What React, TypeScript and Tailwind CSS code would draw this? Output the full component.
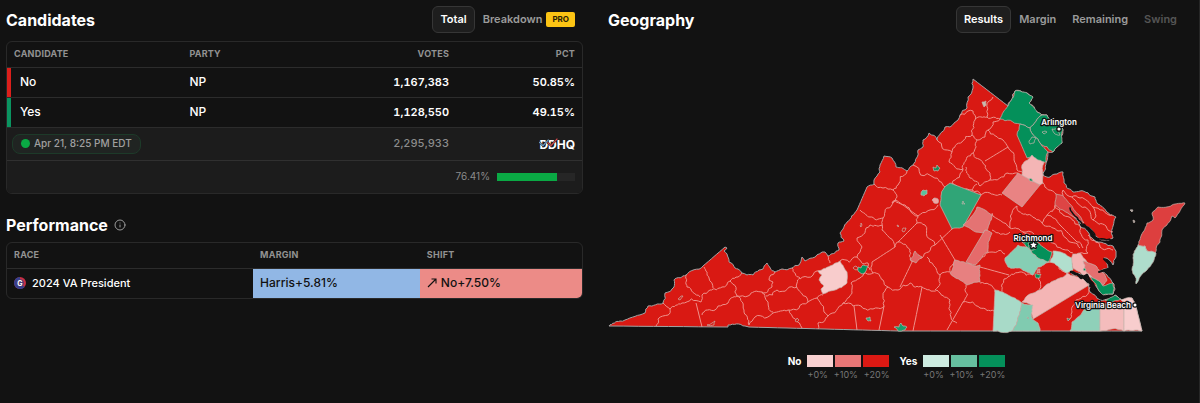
import { Info } from "lucide-react";

type Point = [number, number];

const parse = (s: string): Point[] =>
  s.trim().split(/\s+/).map((pair) => pair.split(",").map(Number) as Point);

// Midpoint displacement; an edge shared by two shapes gets the same wiggle in both.
function wiggle(a: Point, b: Point, depth: number, amp: number): Point[] {
  const dx = b[0] - a[0];
  const dy = b[1] - a[1];
  const len = Math.hypot(dx, dy);
  if (depth === 0 || len < 3) return [b];
  const h = Math.sin((a[0] + b[0]) * 12.9898 + (a[1] + b[1]) * 78.233) * 43758.5453;
  const r = (h - Math.floor(h) - 0.5) * amp * len;
  const sign = dx > 0 || (dx === 0 && dy > 0) ? 1 : -1;
  const mid: Point = [
    (a[0] + b[0]) / 2 - ((dy * sign) / len) * r,
    (a[1] + b[1]) / 2 + ((dx * sign) / len) * r,
  ];
  return [...wiggle(a, mid, depth - 1, amp), ...wiggle(mid, b, depth - 1, amp)];
}

function rough(s: string, closed = false, amp = 0.3): string {
  const pts = parse(s);
  if (closed) pts.push(pts[0]);
  const out: Point[] = [pts[0]];
  for (let i = 1; i < pts.length; i++) {
    const len = Math.hypot(pts[i][0] - pts[i - 1][0], pts[i][1] - pts[i - 1][1]);
    out.push(...wiggle(pts[i - 1], pts[i], 3, len > 24 ? 0 : amp));
  }
  return "M" + out.map((p) => p[0].toFixed(1) + " " + p[1].toFixed(1)).join("L") + (closed ? "Z" : "");
}

const mainland =
  "609,326 620,321 625,320 645,313 648,306 663,303 665,293 674,287 674,280 686,275 703,266 725,247 727,248 724,251 727,254 729,262 735,268 738,269 742,273 747,275 753,275 759,270 763,269 767,263 775,272 782,269 792,268 799,265 802,257 805,261 825,252 828,256 839,250 838,243 844,241 840,233 847,222 857,210 867,187 874,184 874,180 880,172 880,165 884,156 892,158 896,167 907,171 913,165 918,150 923,147 923,140 929,133 937,140 945,127 950,127 958,120 960,115 967,108 968,97 973,88 973,79 1008,106 1015,91 1027,93 1033,97 1029,103 1037,112 1047,115 1052,121 1061,125 1063,130 1062,143 1053,152 1048,152 1046,163 1043,175 1050,177 1057,174 1063,172 1064,183 1073,192 1080,191 1095,197 1097,203 1106,211 1116,217 1113,226 1113,238 1104,240 1095,236 1092,230 1080,223 1075,215 1070,209 1074,217 1080,226 1088,232 1094,240 1113,246 1116,257 1113,265 1104,258 1108,268 1100,271 1107,275 1112,282 1114,284 1113,294 1103,295 1098,289 1092,283 1087,276 1082,274 1070,272 1082,278 1089,284 1090,292 1100,300 1110,299 1115,295 1122,300 1132,298 1135,303 1142,331 900,331 825,329 749,327 745,326 728,325 728,327";

const borders = [
  "656,326 658,319 668,315 670,309 682,303 701,302 702,295 710,290 722,287 730,281 742,273",
  "663,303 670,309",
  "686,275 687,287 700,297",
  "704,267 709,278 713,288",
  "696,303 702,327",
  "702,315 715,310 718,306 728,303 737,296 748,296 762,292",
  "730,281 737,296 744,310 749,325",
  "762,292 768,302 773,312",
  "749,325 755,317 773,313 788,310 808,302 817,298 823,295",
  "775,272 769,280 773,282 772,287 762,292",
  "766,296 777,290 797,287",
  "792,268 800,278 797,283 808,302",
  "800,279 820,271",
  "789,310 802,328",
  "817,298 828,316 818,323 818,329",
  "828,316 843,303 852,293 851,283 860,278 873,273",
  "843,303 853,306 873,309 884,306",
  "854,306 857,330",
  "888,287 884,306 879,330",
  "873,273 883,280 888,287 898,290 910,283 922,287 937,290 950,300 951,317 957,323",
  "922,287 913,331",
  "828,256 830,263",
  "840,261 857,257 862,247 857,238 870,225 883,226",
  "857,257 868,263 870,270",
  "860,210 870,217 883,218 885,212 896,200 918,216 917,223 898,242 895,247 872,262 873,273",
  "883,218 882,230 895,247",
  "918,216 938,205",
  "917,223 925,225 935,245 922,258 912,262",
  "898,242 910,250 912,262 900,287",
  "935,245 953,228",
  "927,257 940,275 935,290",
  "940,275 950,272",
  "874,184 883,188 893,190 898,185 907,171",
  "893,190 897,197 892,203 896,200",
  "895,200 910,210 918,216",
  "913,165 933,177 945,187",
  "937,140 952,152 949,162 963,169 952,183",
  "952,152 962,142 972,135 975,120 973,111 968,111 960,115",
  "975,118 987,117 993,97",
  "987,117 1000,119",
  "972,135 977,140 985,137 988,130 993,122 1000,119",
  "963,169 967,157 973,153 977,140",
  "973,153 983,163 990,175 990,180 980,186 970,178 966,167",
  "985,161 1008,147",
  "988,130 1003,140 1008,147 1014,160 1017,170 1023,173",
  "952,183 972,190 977,184",
  "990,180 1007,173 1018,173",
  "972,190 981,195 990,193 1002,195",
  "992,213 1010,228 1023,232 1034,234",
  "1017,206 1010,228",
  "1017,206 1027,215 1042,223 1053,228 1066,238 1080,248",
  "1042,223 1047,215 1055,205 1063,203",
  "992,230 1010,232",
  "982,257 992,252 1005,254",
  "980,267 1009,275",
  "1003,293 1004,279 1020,272 1033,275",
  "980,283 995,292",
  "966,285 963,302 947,330",
  "963,302 980,308 994,311",
  "1038,277 1038,297",
  "950,272 955,260 940,235",
  "1043,183 1056,194",
  "1060,200 1063,190 1072,197 1085,207 1093,220 1106,226 1113,232",
  "1072,197 1080,198 1093,207 1112,215",
  "1093,207 1096,216 1093,220",
  "1055,206 1063,215 1080,226 1088,240 1088,253 1080,253",
  "1047,215 1060,225 1077,242 1083,248",
  "1023,232 1040,236 1053,243 1073,253",
  "1088,235 1100,247 1113,250",
  "1050,262 1058,266 1067,273",
  "1090,287 1076,300 1072,312 1068,320",
];

const counties: [string, string][] = [
  ["#04905a", "1015,91 1027,93 1033,97 1029,103 1037,112 1042,115 1030,128 1020,124 1000,119 1008,106"],
  ["#04905a", "1042,115 1047,115 1052,121 1061,125 1063,130 1062,143 1053,152 1040,143 1030,128"],
  ["#04905a", "1020,124 1030,128 1040,143 1048,152 1046,162 1032,157 1027,158 1017,135"],
  ["#f4b5b5", "1032,155 1044,162 1043,175 1043,183 1040,185 1022,175 1022,165"],
  ["#e98383", "1018,173 1040,185 1022,207 1002,193"],
  ["#30a577", "950,183 981,195 963,227 956,228 952,229 940,205 944,188"],
  ["#e47373", "977,207 992,215 985,232 963,225"],
  ["#e56b6b", "985,230 992,233 988,252 980,260 975,265 966,262"],
  ["#e78080", "955,260 966,263 980,265 980,282 967,285 950,273"],
  ["#86ceb4", "1018,245 1027,247 1032,253 1038,258 1050,262 1038,267 1033,275 1020,268 1008,267 1005,258"],
  ["#04905a", "1022,242 1033,241 1043,247 1052,252 1048,262 1038,258 1032,253 1027,247"],
  ["#b1dfce", "1053,251 1063,253 1072,258 1073,270 1067,273 1058,266 1050,262"],
  ["#f4b5b5", "1073,254 1080,253 1087,262 1092,277 1082,274 1073,268"],
  ["#e56f6f", "1083,261 1097,267 1102,272 1107,280 1103,285 1085,270"],
  ["#04905a", "1090,277 1097,280 1103,286 1113,283 1113,294 1103,295 1098,289"],
  ["#04905a", "1112,297 1115,295 1121,299 1110,303 1105,300"],
  ["#f4b5b5", "1067,273 1082,278 1089,285 1033,319 1031,305 1022,302 1040,290 1056,280"],
  ["#a8dac8", "995,290 1008,295 1022,303 1018,317 1012,331 993,331"],
  ["#80cbb0", "1022,303 1033,305 1032,318 1038,323 1040,331 1012,331 1018,317"],
  ["#8fd0b9", "1070,331 1072,322 1085,308 1100,306 1100,331"],
  ["#f4bcbc", "1100,303 1110,303 1124,304 1124,331 1100,331"],
  ["#f8cdcd", "1121,300 1132,298 1135,303 1142,331 1124,331 1124,304"],
  ["#f8cccc", "818,271 830,266 840,261 847,272 847,283 835,290 823,294 821,289 824,286 819,280 822,275"],
  ["#e26565", "915,251 922,257 916,263 910,260"],
  ["#dd4545", "1056,194 1064,197 1070,204 1078,214 1084,223 1072,216 1063,210 1055,205"],
  ["#dd3f3f", "1158,207 1172,205 1185,203 1175,218 1172,216 1162,230 1160,242 1155,253 1147,251 1145,246 1138,245 1143,232 1147,223 1153,220 1152,213"],
  ["#aeddcc", "1138,245 1145,246 1147,251 1156,253 1147,270 1136,284 1132,270 1133,258"],
];

const cities: [string, string][] = [
  ["#178f5d", "933,167 936,168 937,165 940,168 938,171 934,171"],
  ["#5bc29c", "921,193 923,190 927,190 927,194 924,196 921,195"],
  ["#f2a3a3", "932,200 934,198 938,199 938,203 934,203"],
  ["#30a577", "962,204 963,201 965,204"],
  ["#c9b9ac", "982,102 986,101 986,105 984,107"],
  ["#04905a", "858,267 861,268 863,265 868,266 866,271 862,274 858,271"],
  ["#d91913", "853,268 856,266 858,269 856,270"],
  ["#30a577", "866,318 870,317 871,321 868,321"],
  ["#1a9d6c", "894,327 899,327 901,323 903,326 907,327 905,330 898,331"],
  ["#04905a", "1029,179 1032,179 1033,182 1030,181"],
  ["#04905a", "1035,274 1041,274 1040,278 1036,278"],
  ["#e56f6f", "1038,269 1040,269 1040,273 1037,273"],
  ["#14805a", "1027,317 1029,318 1028,319"],
  ["#14805a", "1067,318 1070,319 1068,321"],
  ["#d91913", "678,299 681,296 683,296 680,300"],
  ["#d91913", "707,325 712,323 715,321 714,325"],
  ["#d91913", "795,321 797,318 799,320 797,322"],
  ["#d91913", "860,226 861,223 862,225 861,227"],
  ["#d91913", "897,225 899,226 898,227"],
  ["#d91913", "902,231 903,228 906,228 904,232"],
  ["#04905a", "1029,141 1032,137 1036,138 1034,143 1030,144"],
  ["#04905a", "1042,132 1045,131 1047,132 1044,134"],
  ["#04905a", "1052,129 1059,130 1060,135 1054,133"],
  ["#04905a", "1083,269 1085,268 1086,270 1084,271"],
  ["#aaa7a5", "1130,210 1133,210 1132,212"],
  ["#aaa7a5", "1133,220 1135,221 1134,223"],
  ["#04905a", "1028,243 1033,240 1038,243 1036,249 1030,250"],
];

function VirginiaMap() {
  return (
    <svg viewBox="608 36 577 300" className="block w-full overflow-visible" role="img" aria-label="Virginia results by county">
      <path d={rough(mainland, true)} fill="#d91913" stroke="#a3a3a3" strokeWidth="1" strokeLinejoin="round" />
      <g fill="none" stroke="#ee918b" strokeWidth="1" strokeLinejoin="round">
        {borders.map((b) => (
          <path key={b} d={rough(b, false, 0.42)} />
        ))}
      </g>
      <g stroke="#c5b5ae" strokeWidth="0.7" strokeLinejoin="round">
        {counties.map(([fill, pts]) => (
          <path key={pts} d={rough(pts, true, 0.22)} fill={fill} />
        ))}
        {cities.map(([fill, pts]) => (
          <path key={pts} d={rough(pts, true)} fill={fill} />
        ))}
      </g>
      <g fill="none" stroke="#121212" strokeLinecap="round" strokeLinejoin="round">
        <path d={rough("1070,208 1075,216 1082,224 1090,229 1095,237 1104,239 1114,241", false)} strokeWidth="1.5" />
        <path d={rough("1071,272 1077,274 1081,278 1087,275 1090,281 1095,290 1103,297 1109,296", false)} strokeWidth="2.6" />
        <path d="M1099 272l12-4M1104 259l6 6" strokeWidth="2" />
      </g>
      <g fill="#fff" stroke="#111" strokeWidth="2.5" paintOrder="stroke" strokeLinejoin="round" className="font-['Inter',sans-serif] text-[8px] font-semibold">
        <circle cx="1059" cy="129" r="1.6" />
        <circle cx="1135" cy="305" r="1.5" />
        <path d="M1033.5 241.6l1 2.2 2.4.2-1.8 1.6.6 2.3-2.2-1.2-2.1 1.2.5-2.3-1.8-1.6 2.4-.2z" />
        <text x="1059" y="125" textAnchor="middle">Arlington</text>
        <text x="1033" y="241" textAnchor="middle">Richmond</text>
        <text x="1103" y="308" textAnchor="middle">Virginia Beach</text>
      </g>
    </svg>
  );
}

function Tab({ label, active, dim }: { label: string; active?: boolean; dim?: boolean }) {
  const look = active
    ? "border-[#363636] bg-[#1e1e1e] text-white"
    : dim
      ? "border-transparent text-[#555]"
      : "border-transparent text-[#9b9b9b]";
  return (
    <button type="button" disabled={dim} className={"h-[27px] rounded-md border px-[7px] text-[11px] font-semibold " + look}>
      {label}
    </button>
  );
}

function DdhqLogo() {
  return (
    <svg viewBox="0 0 36 12" className="ml-auto block h-3 w-9" role="img" aria-label="DDHQ">
      <text x="36" y="10.5" textAnchor="end" fill="#fff" className="font-['Inter',sans-serif] text-[12px] font-bold">DDHQ</text>
      <g fill="none">
        <path d="M0 4L4 7.6L9.6 1.6" stroke="#1c1c1c" strokeWidth="2" />
        <path d="M8.6 4.4L12 7.6L18.4 0.6" stroke="#1c1c1c" strokeWidth="2" />
        <path d="M0 4L4 7.6L9.6 1.6" stroke="#6f9cc0" strokeWidth="1.2" />
        <path d="M8.6 4.4L12 7.6L18.4 0.6" stroke="#d0484c" strokeWidth="1.2" />
      </g>
    </svg>
  );
}

const head = "px-[7px] text-[9px] font-bold uppercase tracking-wide text-[#929292]";

const candidates = [
  { name: "No", party: "NP", votes: "1,167,383", pct: "50.85%", bar: "bg-[#dc1f1b]" },
  { name: "Yes", party: "NP", votes: "1,128,550", pct: "49.15%", bar: "bg-[#0a9460]" },
];

const legend = [
  { name: "No", steps: [["+0%", "bg-[#f8d0d0]"], ["+10%", "bg-[#e97676]"], ["+20%", "bg-[#dc1913]"]] },
  { name: "Yes", steps: [["+0%", "bg-[#cdebe0]"], ["+10%", "bg-[#66bf9f]"], ["+20%", "bg-[#04905a]"]] },
];

export default function App() {
  return (
    <main className="grid min-h-screen grid-cols-2 gap-[25px] border-r border-[#262626] bg-[#121212] pt-1.5 pr-3.5 pl-1.5 font-['Inter',sans-serif] text-white">
      <div>
        <section>
          <div className="mb-2 flex items-center justify-between">
            <h2 className="text-base leading-6 font-bold">Candidates</h2>
            <div className="flex items-center pr-2">
              <Tab label="Total" active />
              <button type="button" className="flex items-center gap-1 pl-2 text-[11px] font-semibold text-[#9b9b9b]">
                Breakdown
                <span className="rounded-xs bg-[#fcc414] px-1.5 text-[8px] leading-[15px] font-bold text-[#2c2203]">PRO</span>
              </button>
            </div>
          </div>
          <div className="overflow-hidden rounded-md border border-[#292929]">
            <table className="w-full table-fixed border-collapse text-xs font-medium">
              <colgroup>
                <col className="w-[30.5%]" />
                <col className="w-[24%]" />
                <col className="w-[23.6%]" />
                <col />
              </colgroup>
              <thead>
                <tr className="h-[25px] border-b border-[#2c2c2c]">
                  <th className={head + " text-left"}>Candidate</th>
                  <th className={head + " text-left"}>Party</th>
                  <th className={head + " text-right"}>Votes</th>
                  <th className={head + " text-right"}>Pct</th>
                </tr>
              </thead>
              <tbody>
                {candidates.map((c) => (
                  <tr key={c.name} className="border-b border-[#2c2c2c]">
                    <td className="p-0">
                      <div className="flex h-[29px] items-center gap-[9px]">
                        <span className={"h-full w-1 " + c.bar} />
                        {c.name}
                      </div>
                    </td>
                    <td className="px-[7px]">{c.party}</td>
                    <td className="px-[7px] text-right text-[11px] font-semibold tabular-nums">{c.votes}</td>
                    <td className="px-[7px] text-right text-[11px] font-semibold tabular-nums">{c.pct}</td>
                  </tr>
                ))}
              </tbody>
              <tfoot className="bg-[#1c1c1c]">
                <tr className="h-[33px] border-b border-[#303030] text-[#8b8b8b]">
                  <td colSpan={2} className="px-[5px]">
                    <div className="flex">
                      <span className="flex h-5 items-center gap-1 rounded-lg border border-[#1d3a29] bg-[#202422] px-2 text-[10px] text-[#a0a0a0]">
                        <span className="size-[9px] rounded-full bg-[#0aa944]" />
                        Apr 21, 8:25 PM EDT
                      </span>
                    </div>
                  </td>
                  <td className="px-[7px] text-right text-[11px] tabular-nums">2,295,933</td>
                  <td className="px-[7px]">
                    <DdhqLogo />
                  </td>
                </tr>
                <tr className="h-[33px]">
                  <td colSpan={4} className="px-[7px]">
                    <div className="flex items-center justify-end gap-[7px] text-[10px] font-normal text-[#8b8b8b]">
                      76.41%
                      <div className="h-2 w-[78px] bg-[#262626]">
                        <div className="h-full bg-[#0aa944]" style={{ width: "76.41%" }} />
                      </div>
                    </div>
                  </td>
                </tr>
              </tfoot>
            </table>
          </div>
        </section>

        <section className="mt-[19px]">
          <div className="mb-[5px] flex items-center gap-1.5">
            <h2 className="text-base leading-6 font-bold">Performance</h2>
            <Info className="size-3 text-[#9b9b9b]" strokeWidth={2} />
          </div>
          <div className="overflow-hidden rounded-md border border-[#292929]">
            <table className="w-full table-fixed border-collapse text-xs font-medium">
              <colgroup>
                <col className="w-[42.8%]" />
                <col className="w-[29%]" />
                <col />
              </colgroup>
              <thead>
                <tr className="h-[25px] border-b border-[#2c2c2c] text-left">
                  <th className={head}>Race</th>
                  <th className={head}>Margin</th>
                  <th className={head}>Shift</th>
                </tr>
              </thead>
              <tbody>
                <tr className="h-[30px]">
                  <td className="px-[7px]">
                    <div className="flex items-center gap-1.5 text-[11px]">
                      <svg viewBox="0 0 12 12" className="size-3" role="img" aria-label="General">
                        <circle cx="6" cy="6" r="6" fill="#c62f44" />
                        <path d="M6 0a6 6 0 1 0 4.500 10L6 6z" fill="#34408f" />
                        <circle cx="6" cy="6" r="3.8" fill="#4a3c78" />
                        <text x="6" y="8.6" textAnchor="middle" fill="#fff" className="text-[7px] font-bold">G</text>
                      </svg>
                      2024 VA President
                    </div>
                  </td>
                  <td className="bg-[#91b7e5] px-[7px] text-[#111]">Harris+5.81%</td>
                  <td className="bg-[#ec8b87] px-[7px] text-[#111]">
                    <div className="flex items-center gap-1">
                      <svg viewBox="0 0 10 10" className="size-2.5" fill="none" stroke="currentColor" strokeWidth="1.1" aria-hidden="true">
                        <path d="M1 9L9 1M4.500 1H9v4.500" />
                      </svg>
                      No+7.50%
                    </div>
                  </td>
                </tr>
              </tbody>
            </table>
          </div>
        </section>
      </div>

      <section>
        <div className="mb-[3px] flex items-center justify-between">
          <h2 className="text-base leading-6 font-bold">Geography</h2>
          <div className="flex">
            <Tab label="Results" active />
            <Tab label="Margin" />
            <Tab label="Remaining" />
            <Tab label="Swing" dim />
          </div>
        </div>
        <VirginiaMap />
        <div className="mt-[19px] flex justify-center gap-2.5">
          {legend.map((party) => (
            <div key={party.name} className="flex gap-1.5 text-[10px] leading-3 font-bold">
              {party.name}
              <div>
                <div className="flex gap-0.5">
                  {party.steps.map(([label, color]) => (
                    <div key={label} className={"h-3 w-[26px] " + color} />
                  ))}
                </div>
                <div className="mt-0.5 flex justify-between text-[9px] leading-3 font-normal text-[#777]">
                  {party.steps.map(([label]) => (
                    <span key={label}>{label}</span>
                  ))}
                </div>
              </div>
            </div>
          ))}
        </div>
      </section>
    </main>
  );
}
